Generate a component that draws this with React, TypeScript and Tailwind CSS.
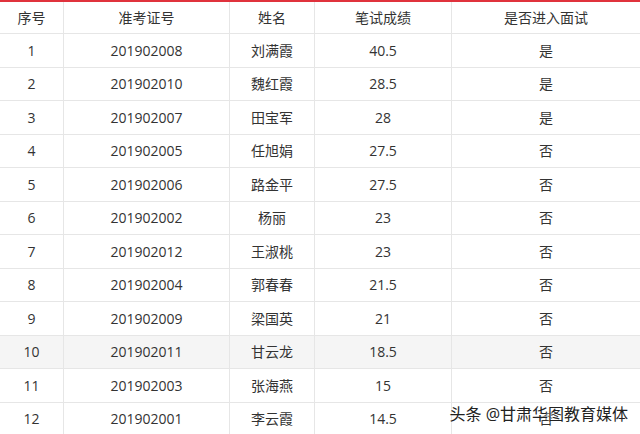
import React from "react";

const rows = [
  ["1","201902008","刘满霞","40.5","是"],
  ["2","201902010","魏红霞","28.5","是"],
  ["3","201902007","田宝军","28","是"],
  ["4","201902005","任旭娟","27.5","否"],
  ["5","201902006","路金平","27.5","否"],
  ["6","201902002","杨丽","23","否"],
  ["7","201902012","王淑桃","23","否"],
  ["8","201902004","郭春春","21.5","否"],
  ["9","201902009","梁国英","21","否"],
  ["10","201902011","甘云龙","18.5","否"],
  ["11","201902003","张海燕","15","否"],
  ["12","201902001","李云霞","14.5","否"],
];
const cols = "grid grid-cols-[64px_166px_85px_137px_188px]";
const cell = "flex items-center justify-center border-r border-b border-[#e6e6e6] last:border-r-0";

export default function App() {
  return (
    <div className="relative w-[640px] h-[434px] overflow-hidden bg-white text-[14px] text-[#333]" style={{ fontFamily: '"Open Sans","Noto Sans CJK SC",sans-serif' }}>
      <div className="h-[2px] bg-[#e0323c]" />
      <div className={`${cols} h-[32px]`}>
        {["序号","准考证号","姓名","笔试成绩","是否进入面试"].map(h => <div key={h} className={cell}>{h}</div>)}
      </div>
      {rows.map((r, i) => (
        <div key={i} className={`${cols} h-[33.5px] ${i === 9 ? "bg-[#f5f5f5]" : ""}`}>
          {r.map((c, j) => <div key={j} className={cell}>{c}</div>)}
        </div>
      ))}
      <div className="absolute right-[12px] bottom-[8px] text-[16px] text-[#222]" style={{ textShadow: "0 0 2px #fff, 0 0 2px #fff" }}>头条 @甘肃华图教育媒体</div>
    </div>
  );
}
